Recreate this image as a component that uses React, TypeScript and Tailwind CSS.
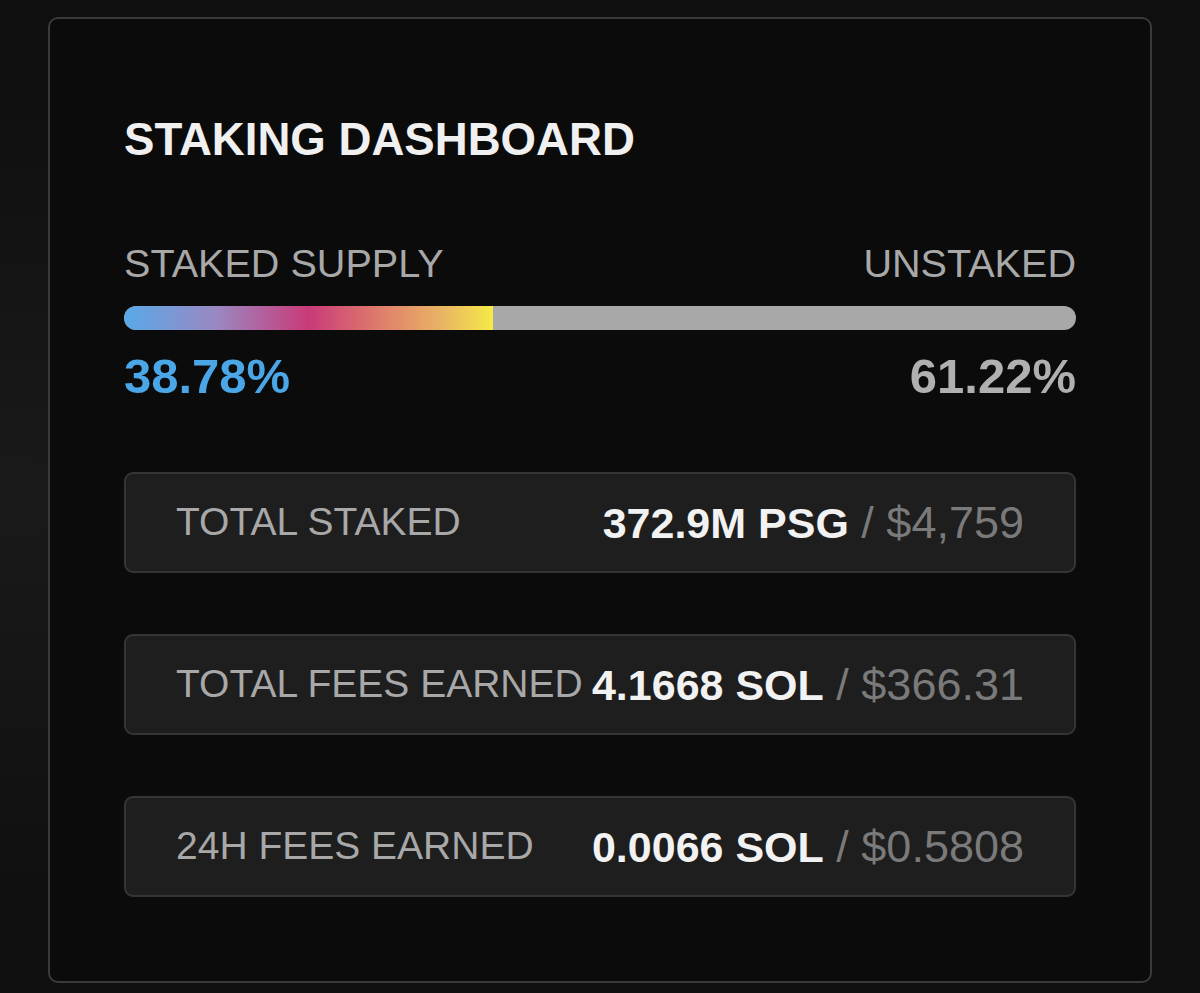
const rows = [
  { label: "TOTAL STAKED", value: "372.9M PSG", usd: "$4,759" },
  { label: "TOTAL FEES EARNED", value: "4.1668 SOL", usd: "$366.31" },
  { label: "24H FEES EARNED", value: "0.0066 SOL", usd: "$0.5808" },
];

const staked = 38.78;

export default function App() {
  return (
    <div
      className="min-h-[993px] bg-[#111111] bg-[radial-gradient(ellipse_at_left,#1a1a1a_0%,#0f0f0f_60%)] px-[48px] pt-[17px] pb-[10px]"
      style={{ fontFamily: '"Liberation Sans", Arial, sans-serif' }}
    >
      <div className="h-[966px] rounded-[10px] border-2 border-[#3a3a3a] bg-[#0b0b0b] px-[74px] pt-[98px]">
        <h1 className="text-[45.6px] leading-[45px] font-bold text-[#f0f0f0]">
          STAKING DASHBOARD
        </h1>

        <div className="mt-[82px] flex justify-between text-[39.6px] leading-[39px] text-[#a8a8a8]">
          <span>STAKED SUPPLY</span>
          <span>UNSTAKED</span>
        </div>

        <div className="mt-[23px] flex h-[24px] overflow-hidden rounded-full bg-[#a8a8a8]">
          <div
            className="h-full rounded-l-full bg-[linear-gradient(90deg,#58a9e8_0%,#9a88c2_25%,#c93a78_50%,#e07f6c_70%,#e9b464_86%,#f6ea48_100%)]"
            style={{ width: `${staked}%` }}
          />
        </div>

        <div className="mt-[22px] flex justify-between text-[49px] leading-[48px] font-bold">
          <span className="text-[#4aa6e6]">38.78%</span>
          <span className="text-[#b0b0b0]">61.22%</span>
        </div>

        <div className="mt-[72px] flex flex-col gap-[61px]">
          {rows.map((r) => (
            <div
              key={r.label}
              className="flex h-[101px] items-center justify-between rounded-[9px] border-2 border-[#353535] bg-[#1e1e1e] px-[50px]"
            >
              <span className="text-[39px] text-[#a8a8a8]">{r.label}</span>
              <span className="whitespace-nowrap">
                <span className="text-[43px] font-bold text-[#f2f2f2]">{r.value}</span>
                <span className="text-[45px] text-[#7a7a7a]"> / {r.usd}</span>
              </span>
            </div>
          ))}
        </div>
      </div>
    </div>
  );
}
